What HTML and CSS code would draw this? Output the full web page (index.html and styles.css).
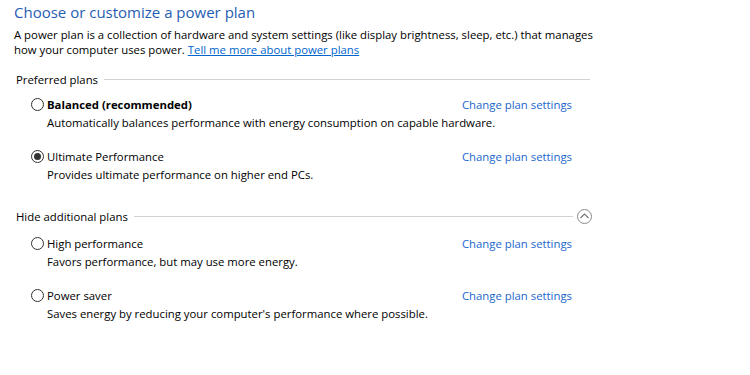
FILE: index.html
```html
<!DOCTYPE html>
<html lang="en">
<head>
    <meta charset="UTF-8">
    <meta name="viewport" content="width=device-width, initial-scale=1.0">
    <title>Power Options</title>
    <link rel="stylesheet" href="styles.css">
</head>
<body>
    <div class="page">
        <h1 class="title">Choose or customize a power plan</h1>
        <p class="intro">A power plan is a collection of hardware and system settings (like display brightness, sleep, etc.) that manages how your computer uses power. <a href="#">Tell me more about power plans</a></p>

        <!-- Preferred plans -->
        <div class="group-head">
            <span>Preferred plans</span>
            <span class="rule"></span>
        </div>

        <div class="plan">
            <div class="plan-top">
                <label class="plan-name"><span class="radio"></span><b>Balanced (recommended)</b></label>
                <a href="#" class="plan-link">Change plan settings</a>
            </div>
            <p class="plan-desc">Automatically balances performance with energy consumption on capable hardware.</p>
        </div>

        <div class="plan">
            <div class="plan-top">
                <label class="plan-name"><span class="radio checked"></span>Ultimate Performance</label>
                <a href="#" class="plan-link">Change plan settings</a>
            </div>
            <p class="plan-desc">Provides ultimate performance on higher end PCs.</p>
        </div>

        <!-- Additional plans -->
        <div class="group-head extra">
            <span>Hide additional plans</span>
            <span class="rule"></span>
            <span class="collapse">
                <svg width="9" height="6" viewBox="0 0 9 6"><path d="M0.5 5 L4.5 1 L8.5 5" fill="none" stroke="#777" stroke-width="1.2"/></svg>
            </span>
        </div>

        <div class="plan">
            <div class="plan-top">
                <label class="plan-name"><span class="radio"></span>High performance</label>
                <a href="#" class="plan-link">Change plan settings</a>
            </div>
            <p class="plan-desc">Favors performance, but may use more energy.</p>
        </div>

        <div class="plan">
            <div class="plan-top">
                <label class="plan-name"><span class="radio"></span>Power saver</label>
                <a href="#" class="plan-link">Change plan settings</a>
            </div>
            <p class="plan-desc">Saves energy by reducing your computer's performance where possible.</p>
        </div>
    </div>
</body>
</html>
```

FILE: styles.css
```css
body {
    margin: 0;
    background: #fff;
    color: #000;
    font-family: "Open Sans", "Noto Sans", sans-serif;
    font-size: 11.35px;
}
.page {
    width: 580px;
    padding: 0 0 0 14px;
}
.title {
    margin: 0;
    font-size: 15px;
    font-weight: normal;
    line-height: 24px;
    color: #1f5db2;
}
.intro {
    margin: 3px 0 0;
    line-height: 15px;
}
.intro a {
    color: #0066cc;
}
.group-head {
    display: flex;
    align-items: center;
    gap: 6px;
    height: 20px;
    margin-top: 12px;
    padding-left: 2px;
    width: 574px;
}
.group-head .rule {
    flex: 1;
    height: 1px;
    background: #d2d2d2;
}
.group-head.extra {
    margin-top: 23px;
    width: 576px;
}
.collapse {
    width: 15px;
    height: 15px;
    border: 1px solid #8a8a8a;
    border-radius: 50%;
    display: flex;
    align-items: center;
    justify-content: center;
    box-sizing: border-box;
    margin-left: -2px;
}
.plan {
    width: 541px;
    padding-left: 17px;
    margin-top: 6px;
}
.plan + .plan {
    margin-top: 16px;
}
.group-head.extra + .plan {
    margin-top: 8px;
}
.plan-top {
    display: flex;
    justify-content: space-between;
    align-items: center;
    height: 18px;
}
.plan-name {
    display: flex;
    align-items: center;
    gap: 3px;
}
.plan-name b {
    font-weight: bold;
}
.radio {
    width: 13px;
    height: 13px;
    border: 1px solid #333;
    border-radius: 50%;
    box-sizing: border-box;
    display: flex;
    align-items: center;
    justify-content: center;
}
.radio.checked::after {
    content: "";
    width: 7px;
    height: 7px;
    border-radius: 50%;
    background: #333;
}
.plan-link {
    color: #1a66cc;
    text-decoration: none;
}
.plan-desc {
    margin: 1px 0 0 16px;
    line-height: 17px;
}
```
